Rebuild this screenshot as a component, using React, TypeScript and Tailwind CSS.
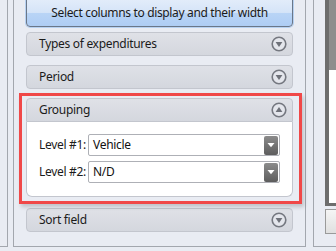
import React from 'react';

const font = { fontFamily: '"Noto Sans", "Open Sans", Arial, sans-serif' };

function CircleArrow({ up }: { up?: boolean }) {
  return (
    <svg width="16" height="16" viewBox="0 0 16 16" className="shrink-0">
      <circle cx="8" cy="8" r="6.8" fill="#e4e6ec" stroke="#757880" strokeWidth="1.6" />
      {up ? (
        <path d="M4.6 10 L11.4 10 L8 4.9 Z" fill="#6e7179" />
      ) : (
        <path d="M4.6 6 L11.4 6 L8 11.1 Z" fill="#6e7179" />
      )}
    </svg>
  );
}

function Header({ title, up, open }: { title: string; up?: boolean; open?: boolean }) {
  return (
    <div
      className={`flex items-center justify-between h-[24px] pl-[12px] pr-[5px] border border-[#c3c6ce] bg-[linear-gradient(to_bottom,#dfe1e7,#d4d7de)] text-[12px] tracking-[-0.3px] text-[#1b1b1b] ${
        open ? 'rounded-t-[4px]' : 'rounded-[4px]'
      }`}
    >
      <span className="leading-none whitespace-nowrap">{title}</span>
      <CircleArrow up={up} />
    </div>
  );
}

function Select({ value }: { value: string }) {
  return (
    <div className="flex items-center h-[22px] w-[192px] border border-[#aeb0b6] rounded-[2px] bg-white pl-[4px] pr-[1px]">
      <span className="flex-1 text-[12px] tracking-[-0.3px] text-[#111] leading-none">{value}</span>
      <div className="w-[14px] h-[19px] rounded-[2px] bg-[linear-gradient(to_bottom,#8b8b8b,#5d5d5d)] flex items-center justify-center">
        <svg width="8" height="6" viewBox="0 0 8 6">
          <path d="M0.5 1 L7.5 1 L4 5.2 Z" fill="#ffffff" />
        </svg>
      </div>
    </div>
  );
}

export default function App() {
  return (
    <div className="w-[336px] h-[251px] bg-[#e9ecf3] overflow-hidden flex" style={font}>
      {/* left neighbour panel */}
      <div className="w-[8px] h-[247px] border-r border-b border-[#a3a7ae] shrink-0" />

      {/* main panel */}
      <div className="ml-[5px] w-[293px] h-[247px] border-l border-r border-b border-[#a3a7ae] shrink-0 px-[12px]">
        <div className="-mt-[1px] h-[28px] rounded-b-[4px] border border-[#6a7789] shadow-[0_0_0_1px_#b7d1f1] bg-[linear-gradient(to_bottom,#e2ecfa_0%,#d5e4f8_48%,#b9d4f6_50%,#aecdf4_100%)] flex items-center justify-center text-[12px] tracking-[-0.35px] text-[#1b1b1b] whitespace-nowrap">
          Select columns to display and their width
        </div>

        <div className="mt-[5px]">
          <Header title="Types of expenditures" />
        </div>
        <div className="mt-[9px]">
          <Header title="Period" />
        </div>

        <div className="relative mt-[9px]">
          <div className="absolute -left-[7px] -right-[9px] -top-[5px] -bottom-[7px] border-[3px] border-[#f04848] shadow-[2px_3px_4px_rgba(0,0,0,0.18)] pointer-events-none" />
          <Header title="Grouping" up open />
          <div className="h-[75px] bg-white border border-t-0 border-[#c3c6ce] rounded-b-[6px] pl-[12px] pt-[12px] flex flex-col gap-[5px]">
            <div className="flex items-center">
              <span className="w-[49px] whitespace-nowrap text-[12px] tracking-[-0.3px] text-[#1b1b1b]">Level #1:</span>
              <Select value="Vehicle" />
            </div>
            <div className="flex items-center">
              <span className="w-[49px] whitespace-nowrap text-[12px] tracking-[-0.3px] text-[#1b1b1b]">Level #2:</span>
              <Select value="N/D" />
            </div>
          </div>
        </div>

        <div className="mt-[11px]">
          <Header title="Sort field" />
        </div>
      </div>

      {/* right neighbour panel */}
      <div className="ml-[7px] flex-1 h-[247px] border-l border-b border-[#a3a7ae] pl-[11px]">
        <div className="h-[206px] border-l-[4px] border-b-[3px] border-[#6d6d6d] flex flex-col">
          <div className="h-[70px] bg-[#8d8d8d]" />
          <div className="flex-1 bg-white" />
        </div>
        <div className="mt-[3px] h-[25px] border-l border-t border-b border-[#9a9a9a] bg-[linear-gradient(to_bottom,#f5f5f5,#e0e0e0)]" />
      </div>
    </div>
  );
}
